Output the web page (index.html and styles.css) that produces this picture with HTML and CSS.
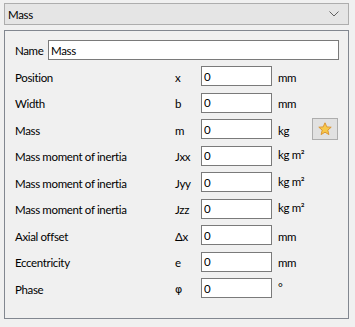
FILE: index.html
```html
<!DOCTYPE html>
<html>
<head>
    <title>Mass</title>
    <link rel="stylesheet" href="styles.css">
</head>
<body>
    <div class="combo">
        <span>Mass</span>
        <svg class="chevron" width="10" height="6" viewBox="0 0 10 6"><path d="M0.5 0.5 L5 5 L9.5 0.5" fill="none" stroke="#606060" stroke-width="1"/></svg>
    </div>
    <div class="panel">
        <div class="name-row">
            <label>Name</label>
            <input class="name-input" type="text" value="Mass">
        </div>
        <div class="fields">
            <span class="lbl">Position</span><span class="sym">x</span><input class="num" value="0"><span class="unit">mm</span><span></span>
            <span class="lbl">Width</span><span class="sym">b</span><input class="num" value="0"><span class="unit">mm</span><span></span>
            <span class="lbl">Mass</span><span class="sym">m</span><input class="num" value="0"><span class="unit">kg</span>
            <button class="star-btn">
                <svg width="14" height="14" viewBox="0 0 14 14"><path d="M7 0.8 L8.8 4.9 L13.2 5.2 L9.8 8.1 L10.9 12.6 L7 10.2 L3.1 12.6 L4.2 8.1 L0.8 5.2 L5.2 4.9 Z" fill="#f7c84a" stroke="#d9912a" stroke-width="0.9" stroke-linejoin="round"/></svg>
            </button>
            <span class="lbl">Mass moment of inertia</span><span class="sym">Jxx</span><input class="num" value="0"><span class="unit up">kg m&sup2;</span><span></span>
            <span class="lbl">Mass moment of inertia</span><span class="sym">Jyy</span><input class="num" value="0"><span class="unit up">kg m&sup2;</span><span></span>
            <span class="lbl">Mass moment of inertia</span><span class="sym">Jzz</span><input class="num" value="0"><span class="unit up">kg m&sup2;</span><span></span>
            <span class="lbl">Axial offset</span><span class="sym">&Delta;x</span><input class="num" value="0"><span class="unit">mm</span><span></span>
            <span class="lbl">Eccentricity</span><span class="sym">e</span><input class="num" value="0"><span class="unit">mm</span><span></span>
            <span class="lbl">Phase</span><span class="sym phi">&#966;</span><input class="num" value="0"><span class="unit up">&deg;</span><span></span>
        </div>
    </div>
</body>
</html>
```

FILE: styles.css
```css
body {
    margin: 0;
    background-color: #f0f0f0;
    font-family: Lato, "Noto Sans", sans-serif;
    font-size: 11.5px;
    letter-spacing: -0.35px;
    color: #000;
}

.combo {
    box-sizing: border-box;
    height: 22px;
    margin: 3px 6px 0 4px;
    padding: 0 9px 0 3px;
    border: 1px solid #adadad;
    background-color: #e5e5e5;
    display: flex;
    align-items: center;
    justify-content: space-between;
}

.panel {
    box-sizing: border-box;
    height: 289px;
    margin: 5px 6px 0 4px;
    padding: 9px 0 0 10px;
    border: 1px solid #828790;
}

.name-row {
    display: flex;
    align-items: center;
    height: 20px;
}

.name-row label {
    width: 33px;
    flex-shrink: 0;
}

.name-input {
    box-sizing: border-box;
    width: 291px;
    height: 20px;
    padding: 0 2px;
    border: 1px solid #7a7a7a;
    font: inherit;
    letter-spacing: inherit;
    outline: none;
}

.fields {
    display: grid;
    grid-template-columns: 160px 26px 71px 40px 26px;
    grid-auto-rows: 26.5px;
    align-items: center;
    margin-top: 2.75px;
}

.lbl,
.sym,
.unit {
    position: relative;
    top: 1px;
}

.phi {
    font-family: "DejaVu Sans", sans-serif;
    font-size: 11px;
}

.num {
    box-sizing: border-box;
    width: 71px;
    height: 20px;
    padding: 0 2px;
    border: 1px solid #7a7a7a;
    font: inherit;
    outline: none;
}

.unit {
    padding-left: 6px;
}

.unit.up {
    top: -1px;
}

.star-btn {
    box-sizing: border-box;
    width: 26px;
    height: 22px;
    padding: 0;
    border: 1px solid #adadad;
    background-color: #e1e1e1;
    display: flex;
    align-items: center;
    justify-content: center;
}
```
